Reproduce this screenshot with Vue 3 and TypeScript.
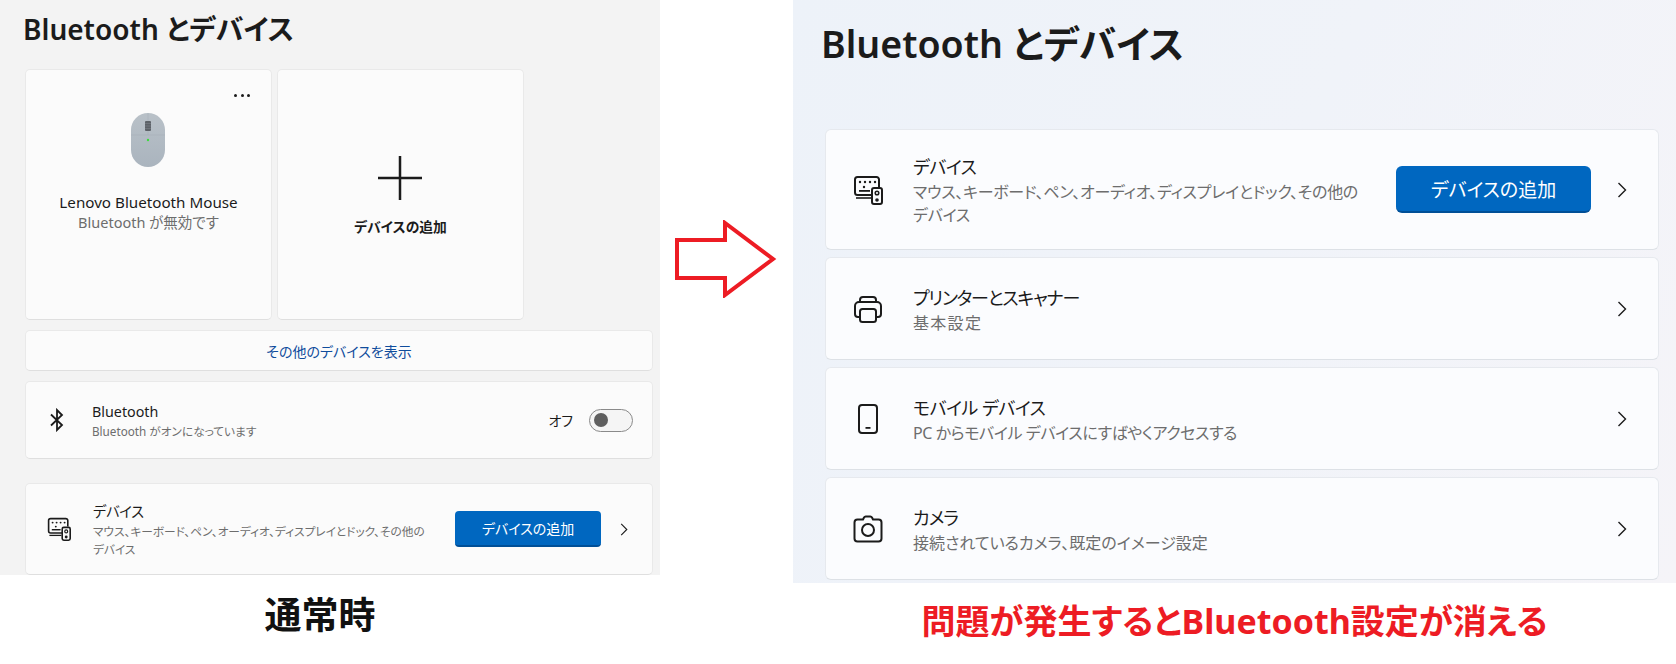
<template>
  <div class="page">
    <svg class="defs" width="0" height="0" aria-hidden="true">
      <symbol id="i-devices" viewBox="0 0 30 30">
        <path d="M19 20H4.500A2.500 2.500 0 0 1 2 17.500V4.500A2.500 2.500 0 0 1 4.500 2h19A2.500 2.500 0 0 1 26 4.500V12" fill="none" stroke="currentColor" stroke-width="2" />
        <path d="M3 23h15" fill="none" stroke="currentColor" stroke-width="1.600" />
        <rect x="19" y="13" width="10" height="16" rx="2" fill="none" stroke="currentColor" stroke-width="2" />
        <circle cx="24" cy="18" r="1.800" fill="none" stroke="currentColor" stroke-width="1.500" />
        <circle cx="24" cy="25" r="1.800" fill="currentColor" />
        <g fill="currentColor">
          <circle cx="7" cy="7" r="1.200" /><circle cx="12" cy="7" r="1.200" /><circle cx="17" cy="7" r="1.200" /><circle cx="22" cy="7" r="1.200" />
          <circle cx="11" cy="12" r="1.200" />
          <rect x="6" y="15" width="11" height="1.800" />
        </g>
      </symbol>
      <symbol id="i-printer" viewBox="0 0 30 30">
        <path d="M7 8V6a3 3 0 0 1 3-3h10a3 3 0 0 1 3 3v2" fill="none" stroke="currentColor" stroke-width="2" />
        <path d="M7 23H5a3 3 0 0 1-3-3V12a4 4 0 0 1 4-4h18a4 4 0 0 1 4 4v8a3 3 0 0 1-3 3h-2" fill="none" stroke="currentColor" stroke-width="2" />
        <rect x="7" y="15" width="16" height="13" rx="2.500" fill="none" stroke="currentColor" stroke-width="2" />
      </symbol>
      <symbol id="i-phone" viewBox="0 0 30 30">
        <rect x="6" y="1" width="18" height="28" rx="3" fill="none" stroke="currentColor" stroke-width="2" />
        <rect x="12.500" y="23" width="5" height="1.800" fill="currentColor" />
      </symbol>
      <symbol id="i-camera" viewBox="0 0 30 30">
        <path d="M10 5.500 11 3.500A2 2 0 0 1 12.800 2.500h4.400A2 2 0 0 1 19 3.500l1 2h5.500A3 3 0 0 1 28.500 8.500v16a3 3 0 0 1-3 3h-21a3 3 0 0 1-3-3v-16a3 3 0 0 1 3-3Z" fill="none" stroke="currentColor" stroke-width="2" />
        <circle cx="15" cy="16" r="6" fill="none" stroke="currentColor" stroke-width="2" />
      </symbol>
      <symbol id="i-chevron" viewBox="0 0 10 16">
        <path d="M1.500 1 8.500 8 1.500 15" fill="none" stroke="currentColor" stroke-width="1.400" />
      </symbol>
    </svg>

    <section class="side side-left">
      <div class="panel panel-left">
        <h1 class="title-left">Bluetooth とデバイス</h1>

        <div class="tiles">
          <div class="tile tile-mouse">
            <span class="more"><i></i><i></i><i></i></span>
            <svg class="mouse" viewBox="0 0 34 54" width="34" height="54">
              <defs>
                <linearGradient id="mouseBody" x1="0" y1="0" x2="0" y2="1">
                  <stop offset="0" stop-color="#b9c1c8" />
                  <stop offset="1" stop-color="#aab4be" />
                </linearGradient>
              </defs>
              <rect x="0" y="0" width="34" height="54" rx="17" fill="url(#mouseBody)" />
              <path d="M0 22H34M17 0V22" stroke="#a4adb5" stroke-width="0.500" />
              <rect x="14" y="8" width="6" height="10" rx="1" fill="#5d6268" />
              <path d="M14 10.500H20M14 13H20M14 15.500H20" stroke="#7d8389" stroke-width="0.600" />
              <circle cx="17" cy="27" r="1.200" fill="#3ddc3d" />
            </svg>
            <div class="tile-name">Lenovo Bluetooth Mouse</div>
            <div class="tile-sub">Bluetooth が無効です</div>
          </div>
          <div class="tile tile-add">
            <svg class="plus" viewBox="0 0 44 44" width="44" height="44">
              <path d="M22 0V44M0 22H44" stroke="#1b1b1b" stroke-width="2.500" />
            </svg>
            <div class="tile-label">デバイスの追加</div>
          </div>
        </div>

        <div class="card show-more">その他のデバイスを表示</div>

        <div class="card row-bt">
          <svg class="bt-icon" viewBox="0 0 14 24" width="14" height="24">
            <path d="M1 6.500 12 17 7 22V2l5 5L1 17.500" fill="none" stroke="#1b1b1b" stroke-width="1.800" />
          </svg>
          <div class="row-text">
            <div class="row-title-s">Bluetooth</div>
            <div class="row-sub-s">Bluetooth がオンになっています</div>
          </div>
          <span class="off-label">オフ</span>
          <span class="toggle"><span class="knob"></span></span>
        </div>

        <div class="card row-dev">
          <svg class="icon-s"><use href="#i-devices" /></svg>
          <div class="row-text">
            <div class="row-title-s kana">デバイス</div>
            <div class="row-sub-s">マウス、キーボード、ペン、オーディオ、ディスプレイとドック、その他の</div>
            <div class="row-sub-s">デバイス</div>
          </div>
          <button class="add-btn add-btn-s">デバイスの追加</button>
          <svg class="chevron-s"><use href="#i-chevron" /></svg>
        </div>
      </div>
      <p class="caption caption-black">通常時</p>
    </section>

    <div class="arrow-col">
      <svg viewBox="0 0 104 78" width="104" height="78">
        <path d="M2 20H50V3L98 39 50 75V58H2Z" fill="#fff" stroke="#ed1c24" stroke-width="4" />
      </svg>
    </div>

    <section class="side side-right">
      <div class="panel panel-right">
        <h1 class="title-right">Bluetooth とデバイス</h1>
        <div class="list">
          <div v-for="item in rows" :key="item.title" class="card big-row" :style="{ height: item.height + 'px' }">
            <svg class="icon-l"><use :href="item.icon" /></svg>
            <div class="row-text">
              <div class="row-title-l" :style="{ letterSpacing: item.titleTrack + 'px' }">{{ item.title }}</div>
              <div v-for="line in item.sub" :key="line" class="row-sub-l" :style="{ letterSpacing: item.subTrack + 'px' }">{{ line }}</div>
            </div>
            <button v-if="item.action" class="add-btn add-btn-l">{{ item.action }}</button>
            <svg class="chevron-l"><use href="#i-chevron" /></svg>
          </div>
        </div>
      </div>
      <p class="caption caption-red">問題が発生するとBluetooth設定が消える</p>
    </section>
  </div>
</template>

<script setup lang="ts">
type Row = {
  icon: string
  title: string
  sub: string[]
  height: number
  titleTrack: number
  subTrack: number
  action?: string
}

const rows: Row[] = [
  {
    icon: '#i-devices',
    title: 'デバイス',
    sub: ['マウス、キーボード、ペン、オーディオ、ディスプレイとドック、その他の', 'デバイス'],
    height: 121,
    titleTrack: -0.5,
    subTrack: -0.27,
    action: 'デバイスの追加',
  },
  { icon: '#i-printer', title: 'プリンターとスキャナー', sub: ['基本設定'], height: 103, titleTrack: -1.2, subTrack: 1.3 },
  {
    icon: '#i-phone',
    title: 'モバイル デバイス',
    sub: ['PC からモバイル デバイスにすばやくアクセスする'],
    height: 103,
    titleTrack: -0.5,
    subTrack: -0.4,
  },
  { icon: '#i-camera', title: 'カメラ', sub: ['接続されているカメラ、既定のイメージ設定'], height: 103, titleTrack: -1, subTrack: 0 },
]
</script>

<style>
html,
body {
  background: #fff;
  overflow: hidden;
}
</style>

<style scoped>
.page {
  display: flex;
  width: 1676px;
  height: 664px;
  overflow: hidden;
  font-family: 'Noto Sans', 'Noto Sans CJK JP', sans-serif;
  font-feature-settings: 'palt';
  color: #1b1b1b;
}

.defs {
  position: absolute;
}

.side {
  display: flex;
  flex-direction: column;
  flex: none;
}

.side-left {
  width: 660px;
}

.side-right {
  width: 883px;
}

.panel {
  overflow: hidden;
}

.panel-left {
  height: 575px;
  background: #f3f3f3;
  padding: 0 7px 0 25px;
}

.panel-right {
  height: 583px;
  background: linear-gradient(115deg, #edf2f9 0%, #f0f3f9 50%, #f5f4f8 100%);
  padding: 0 17px 0 32px;
}

.title-left {
  margin: 0 0 0 -2px;
  height: 69px;
  padding-top: 9px;
  font-size: 28px;
  line-height: 40px;
  font-weight: 600;
  box-sizing: border-box;
}

.title-right {
  margin: 0 0 0 -4px;
  height: 129px;
  padding-top: 18px;
  font-size: 37.5px;
  line-height: 52px;
  font-weight: 600;
  box-sizing: border-box;
}

.tiles {
  display: grid;
  grid-template-columns: 247px 247px;
  gap: 5px;
}

.tile {
  position: relative;
  height: 251px;
  box-sizing: border-box;
  background: #fbfbfb;
  border: 1px solid #e9e9e9;
  border-bottom-color: #dfdfdf;
  border-radius: 5px;
  display: flex;
  flex-direction: column;
  align-items: center;
}

.more {
  position: absolute;
  top: 24px;
  right: 21px;
  display: flex;
  gap: 3.5px;
}

.more i {
  width: 3px;
  height: 3px;
  border-radius: 50%;
  background: #1b1b1b;
}

.mouse {
  margin-top: 43px;
  margin-left: -2px;
}

.tile-name {
  margin-top: 25px;
  font-size: 15.2px;
  line-height: 20px;
}

.tile-sub {
  font-size: 14.500px;
  line-height: 20px;
  color: #6d6d6d;
}

.plus {
  margin-top: 86px;
  margin-left: -1px;
}

.tile-label {
  margin-top: 17px;
  font-size: 13.800px;
  line-height: 20px;
  font-weight: 700;
}

.card {
  box-sizing: border-box;
  background: #fbfbfb;
  border: 1px solid #e9e9e9;
  border-bottom-color: #dfdfdf;
  border-radius: 5px;
}

.show-more {
  margin-top: 10px;
  height: 41px;
  display: flex;
  align-items: center;
  justify-content: center;
  font-size: 14px;
  color: #0f4c9c;
}

.row-bt,
.row-dev {
  display: flex;
  align-items: center;
  padding-left: 24px;
}

.row-bt {
  margin-top: 10px;
  height: 78px;
  padding-right: 19px;
}

.row-bt .row-text {
  margin-left: 28px;
  padding-top: 2px;
}

.row-dev {
  margin-top: 24px;
  height: 92px;
  padding-right: 24px;
}

.row-dev .row-text {
  margin-left: 22px;
  padding-top: 1px;
}

.row-text {
  flex: 1;
  min-width: 0;
}

.row-title-s {
  font-size: 14.300px;
  line-height: 20px;
}

.kana {
  letter-spacing: -0.3px;
}

.row-sub-s {
  font-size: 11.700px;
  line-height: 18px;
  color: #6d6d6d;
  white-space: nowrap;
}

.off-label {
  font-size: 14px;
  margin-right: 16px;
}

.toggle {
  width: 44px;
  height: 23px;
  box-sizing: border-box;
  border: 1px solid #8a8a8a;
  border-radius: 12px;
  background: #f5f5f5;
  display: flex;
  align-items: center;
  padding-left: 4px;
}

.knob {
  width: 14px;
  height: 14px;
  border-radius: 50%;
  background: #5f5f5f;
}

.icon-s {
  width: 24px;
  height: 24px;
  flex: none;
  margin-left: -3px;
}

.add-btn {
  flex: none;
  border: none;
  color: #fff;
  background: #0067c0;
  font-family: inherit;
  font-feature-settings: inherit;
  padding: 0;
}

.add-btn-s {
  width: 146px;
  height: 36px;
  border-radius: 4px;
  border-bottom: 2px solid #004f97;
  font-size: 14px;
}

.chevron-s {
  width: 8px;
  height: 13px;
  flex: none;
  margin-left: 19px;
}

.list {
  display: flex;
  flex-direction: column;
  gap: 7px;
}

.big-row {
  display: flex;
  align-items: center;
  background: #fbfcfe;
  border-color: #e6e9ee;
  border-bottom-color: #dde1e6;
  border-radius: 6px;
  padding: 0 31px 0 27px;
}

.icon-l {
  width: 30px;
  height: 30px;
  flex: none;
}

.big-row .row-text {
  margin-left: 30px;
  padding-top: 2px;
}

.row-title-l {
  font-size: 18px;
  line-height: 26px;
  margin-bottom: 1px;
}

.row-sub-l {
  font-size: 16px;
  line-height: 23px;
  color: #6d6d6d;
  white-space: nowrap;
}

.add-btn-l {
  width: 195px;
  height: 47px;
  border-radius: 6px;
  border-bottom: 2px solid #004f97;
  font-size: 19px;
}

.chevron-l {
  width: 10px;
  height: 16px;
  flex: none;
  margin-left: 26px;
}

.caption {
  margin: 0;
  text-align: center;
  font-weight: 700;
}

.caption-black {
  margin-top: 16px;
  padding-right: 20px;
  font-size: 37px;
  line-height: 48px;
  color: #111;
}

.caption-red {
  margin-top: 16px;
  font-size: 34px;
  line-height: 44px;
  color: #ed1c24;
}

.arrow-col {
  width: 133px;
  flex: none;
  display: flex;
  justify-content: flex-start;
  padding-top: 220px;
  padding-left: 15px;
  box-sizing: border-box;
}
</style>
